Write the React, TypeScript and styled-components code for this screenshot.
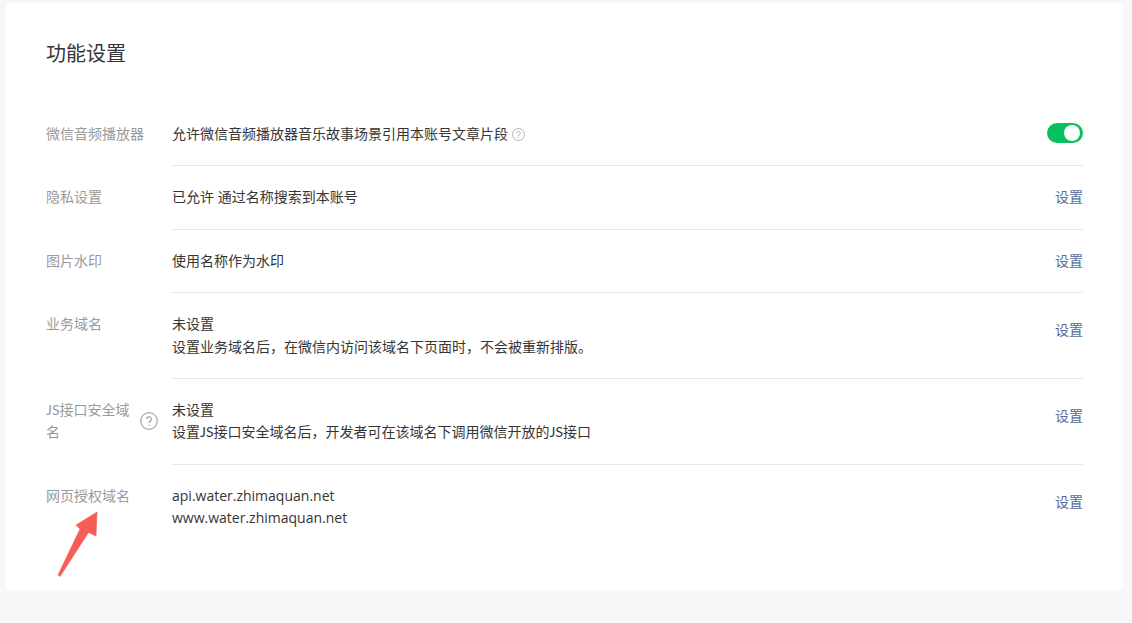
import React from "react";
import styled, { createGlobalStyle } from "styled-components";

const GlobalStyle = createGlobalStyle`
  html, body {
    margin: 0;
    padding: 0;
    background: #f6f7f9;
    overflow: hidden;
  }
  body {
    font-family: "Open Sans", "Noto Sans CJK SC", sans-serif;
    font-size: 14px;
    line-height: 1.6;
    color: #353535;
  }
`;

const Page = styled.div`
  position: relative;
  width: 1132px;
  height: 623px;
  padding: 3px 9px 0 6px;
  box-sizing: border-box;
`;

const Card = styled.section`
  background: #fff;
  border-radius: 4px;
  padding: 37px 40px 40px;
`;

const Title = styled.h2`
  margin: 0 0 35px;
  font-size: 20px;
  font-weight: 400;
  line-height: 28px;
  color: #353535;
`;

const Row = styled.div`
  display: flex;
`;

const Label = styled.div`
  display: flex;
  align-items: center;
  align-self: flex-start;
  width: 126px;
  flex-shrink: 0;
  padding-top: 20px;
  color: #9a9a9a;
`;

const LabelText = styled.span<{ $narrow?: boolean }>`
  width: ${(p) => (p.$narrow ? "86px" : "auto")};
`;

const Latin = styled.span`
  font-family: Lato, sans-serif;
`;

const Body = styled.div<{ $last?: boolean }>`
  flex: 1;
  display: flex;
  justify-content: space-between;
  align-items: flex-start;
  padding: 20px 0;
  border-bottom: ${(p) => (p.$last ? "none" : "1px solid #e7e7e7")};
`;

const Value = styled.div`
  color: #353535;
`;

const Line = styled.div``;

const Action = styled.a<{ $multi?: boolean }>`
  margin-top: ${(p) => (p.$multi ? "6px" : "0")};
  color: #576b95;
  cursor: pointer;
`;

const Toggle = styled.span<{ $on: boolean }>`
  display: flex;
  justify-content: ${(p) => (p.$on ? "flex-end" : "flex-start")};
  width: 36px;
  height: 20px;
  padding: 2px 3px;
  box-sizing: border-box;
  border-radius: 10px;
  background: ${(p) => (p.$on ? "#07c160" : "#ddd")};
  &::after {
    content: "";
    width: 16px;
    height: 16px;
    border-radius: 50%;
    background: #fff;
  }
`;

const HelpSvg = styled.svg<{ $size: number }>`
  width: ${(p) => p.$size}px;
  height: ${(p) => p.$size}px;
  flex-shrink: 0;
`;

const InlineHelp = styled(HelpSvg)`
  margin-left: 4px;
  vertical-align: -2px;
`;

const LabelHelp = styled(HelpSvg)`
  margin-left: 8px;
`;

const Arrow = styled.svg`
  position: absolute;
  left: 50px;
  top: 505px;
  width: 55px;
  height: 80px;
`;

const Help: React.FC<{ as?: typeof InlineHelp; size: number }> = ({ as: Comp = InlineHelp, size }) => (
  <Comp $size={size} viewBox="0 0 18 18" fill="none" stroke="#a8a8a8">
    <circle cx="9" cy="9" r="8.3" strokeWidth="1.2" />
    <path d="M6.6 7.1a2.4 2.4 0 1 1 3.8 2c-.9.6-1.4 1-1.4 2" strokeWidth="1.3" />
    <circle cx="9" cy="13.3" r=".8" fill="#a8a8a8" stroke="none" />
  </Comp>
);

const App: React.FC = () => {
  return (
    <>
      <GlobalStyle />
      <Page>
        <Card>
          <Title>功能设置</Title>
          <Row>
            <Label>微信音频播放器</Label>
            <Body>
              <Value>
                允许微信音频播放器音乐故事场景引用本账号文章片段
                <Help size={13} />
              </Value>
              <Toggle $on />
            </Body>
          </Row>
          <Row>
            <Label>隐私设置</Label>
            <Body>
              <Value>已允许 通过名称搜索到本账号</Value>
              <Action>设置</Action>
            </Body>
          </Row>
          <Row>
            <Label>图片水印</Label>
            <Body>
              <Value>使用名称作为水印</Value>
              <Action>设置</Action>
            </Body>
          </Row>
          <Row>
            <Label>业务域名</Label>
            <Body>
              <Value>
                <Line>未设置</Line>
                <Line>设置业务域名后，在微信内访问该域名下页面时，不会被重新排版。</Line>
              </Value>
              <Action $multi>设置</Action>
            </Body>
          </Row>
          <Row>
            <Label>
              <LabelText $narrow>
                <Latin>JS</Latin>接口安全域名
              </LabelText>
              <Help as={LabelHelp} size={18} />
            </Label>
            <Body>
              <Value>
                <Line>未设置</Line>
                <Line>
                  设置<Latin>JS</Latin>接口安全域名后，开发者可在该域名下调用微信开放的<Latin>JS</Latin>接口
                </Line>
              </Value>
              <Action $multi>设置</Action>
            </Body>
          </Row>
          <Row>
            <Label>网页授权域名</Label>
            <Body $last>
              <Value>
                <Line>api.water.zhimaquan.net</Line>
                <Line>www.water.zhimaquan.net</Line>
              </Value>
              <Action $multi>设置</Action>
            </Body>
          </Row>
        </Card>
        <Arrow viewBox="50 505 55 80">
          <path
            d="M97 512 L96 536 L88.500 532.500 L60 576.500 L58 575 L80 529 L76 525 Z"
            fill="#f55d57"
            stroke="#f55d57"
            strokeWidth="0.6"
            strokeLinejoin="round"
          />
        </Arrow>
      </Page>
    </>
  );
};

export default App;
